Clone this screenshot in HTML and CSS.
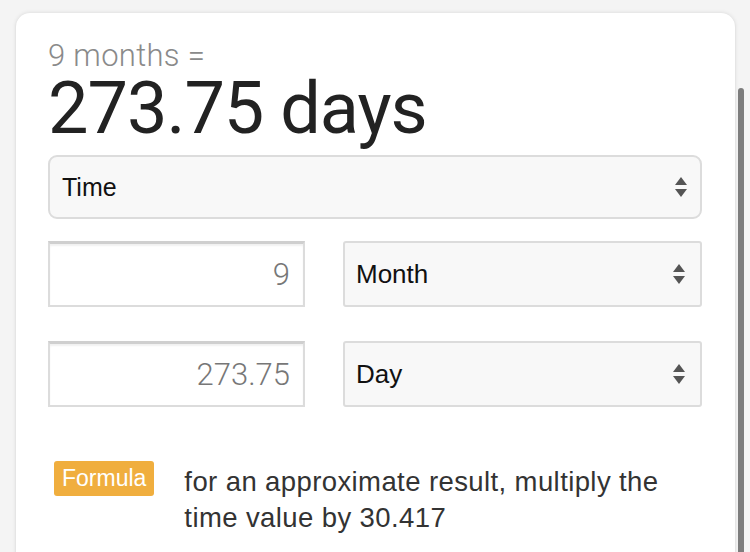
FILE: index.html
```html
<!DOCTYPE html>
<html>
<head>
<meta charset="utf-8">
<link rel="stylesheet" href="styles.css">
</head>
<body>
<div class="page">
  <div class="card">
    <div class="question">9 months =</div>
    <div class="answer">273.75 days</div>
    <div class="select select-wide"><span>Time</span><span class="arrows"><svg width="14" height="22" viewBox="0 0 14 22"><path d="M7 1 L13 9 L1 9 Z" fill="#555"/><path d="M1 13 L13 13 L7 21 Z" fill="#555"/></svg></span></div>
    <div class="row">
      <div class="input">9</div>
      <div class="select"><span>Month</span><span class="arrows"><svg width="14" height="22" viewBox="0 0 14 22"><path d="M7 1 L13 9 L1 9 Z" fill="#555"/><path d="M1 13 L13 13 L7 21 Z" fill="#555"/></svg></span></div>
    </div>
    <div class="row">
      <div class="input">273.75</div>
      <div class="select"><span>Day</span><span class="arrows"><svg width="14" height="22" viewBox="0 0 14 22"><path d="M7 1 L13 9 L1 9 Z" fill="#555"/><path d="M1 13 L13 13 L7 21 Z" fill="#555"/></svg></span></div>
    </div>
    <div class="formula">
      <span class="badge">Formula</span>
      <p class="ftext">for an approximate result, multiply the time value by 30.417</p>
    </div>
  </div>
  <div class="scrollbar"></div>
</div>
</body>
</html>
```
FILE: styles.css
```css
html, body {
  margin: 0;
  padding: 0;
  background: #f4f4f4;
  width: 750px;
  height: 552px;
  overflow: hidden;
}
.page {
  position: relative;
  width: 750px;
  height: 552px;
  padding: 13px 0 0 16px;
  box-sizing: border-box;
  overflow: hidden;
}
.card {
  width: 719px;
  height: 560px;
  background: #fff;
  border-radius: 14px;
  box-shadow: 0 0 4px rgba(0,0,0,0.12), 0 1px 2px rgba(0,0,0,0.06);
  padding: 28px 33px 0 32px;
  box-sizing: border-box;
  font-family: Roboto, "Liberation Sans", sans-serif;
}
.scrollbar {
  position: absolute;
  left: 738px;
  top: 88px;
  width: 6px;
  height: 470px;
  background: #7d7d7d;
  border-radius: 3px 3px 0 0;
}
.question {
  font-size: 31px;
  font-weight: 300;
  color: #8a8a8a;
  line-height: 30px;
  letter-spacing: 0.3px;
}
.answer {
  font-size: 72px;
  font-weight: 400;
  color: #222;
  line-height: 72px;
  letter-spacing: -1px;
  margin-top: 2px;
  margin-bottom: 10px;
}
.select {
  display: flex;
  align-items: center;
  justify-content: space-between;
  background: #f8f8f8;
  border: 2px solid #dcdcdc;
  border-radius: 3px;
  box-sizing: border-box;
  height: 66px;
  padding: 0 14px 0 11px;
  font-family: "Liberation Sans", Arial, sans-serif;
  font-size: 26px;
  color: #111;
}
.select-wide {
  height: 64px;
  border-radius: 9px;
  padding: 0 12px 0 12px;
  font-size: 25px;
  margin-bottom: 22px;
}
.arrows {
  display: flex;
  align-items: center;
}
.row {
  display: flex;
  gap: 38px;
  margin-bottom: 34px;
}
.row .select {
  flex: 1;
}
.input {
  width: 257px;
  height: 66px;
  box-sizing: border-box;
  border: 2px solid #dcdcdc;
  border-top: 3px solid #cfcfcf;
  box-shadow: inset 0 2px 2px rgba(0,0,0,0.06);
  background: #fff;
  display: flex;
  align-items: center;
  justify-content: flex-end;
  padding-right: 13px;
  font-family: Roboto, "Liberation Sans", sans-serif;
  font-weight: 300;
  font-size: 31px;
  color: #777;
}
.formula {
  display: flex;
  align-items: flex-start;
  margin-top: 54px;
  padding-left: 6px;
}
.badge {
  background: #f0ae3e;
  color: #fff;
  font-family: "Liberation Sans", Arial, sans-serif;
  font-size: 23px;
  line-height: 35px;
  padding: 0 8px;
  border-radius: 3px;
  margin-top: 0;
  margin-right: 30px;
  flex: none;
}
.ftext {
  margin: 3px 0 0 0;
  font-family: "Liberation Sans", Arial, sans-serif;
  font-size: 27.5px;
  letter-spacing: 0.4px;
  line-height: 36px;
  color: #333;
  width: 500px;
}
```
